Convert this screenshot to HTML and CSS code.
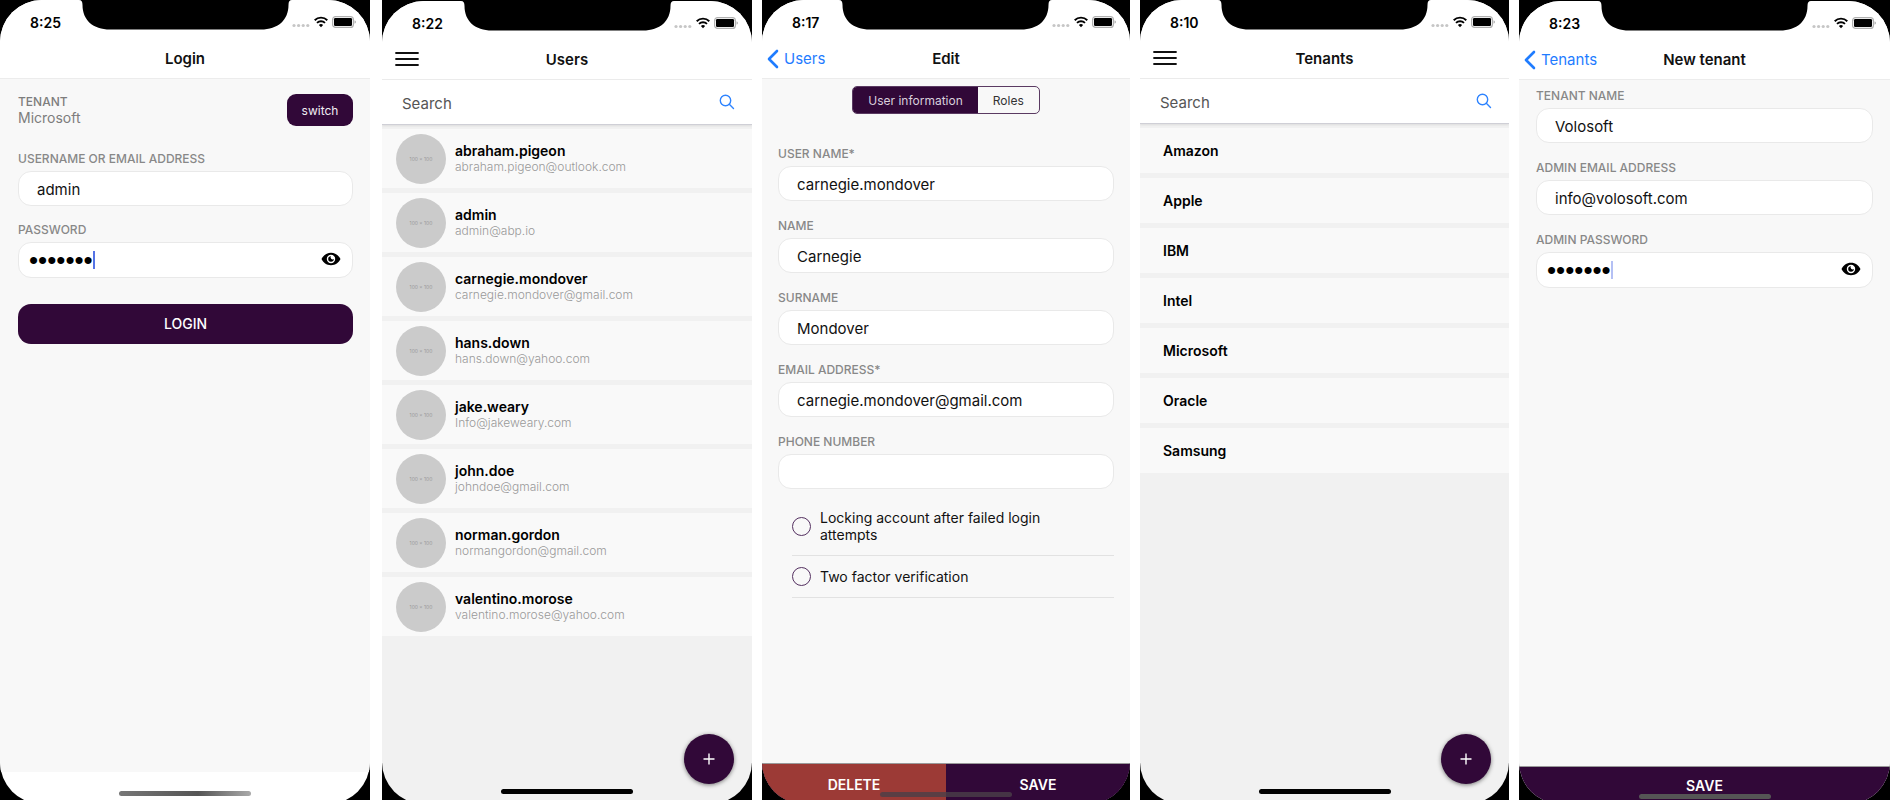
FILE: index.html
```html
<!DOCTYPE html>
<html lang="en">
<head>
<meta charset="utf-8">
<title>Mobile screens</title>
<link rel="stylesheet" href="styles.css">
</head>
<body>
<svg class="sprite" aria-hidden="true">
  <symbol id="notch" viewBox="0 0 213 30"><path d="M0 0C2.500 0 3.500 1.500 3.500 5C3.500 20 14 29.500 31 29.500H182C199 29.500 209.500 20 209.500 5C209.500 1.500 210.500 0 213 0Z"/></symbol>
  <symbol id="dots" viewBox="0 0 18 14"><g fill="#c6c6c6"><circle cx="2" cy="10.500" r="1.600"/><circle cx="6.600" cy="10.500" r="1.600"/><circle cx="11.200" cy="10.500" r="1.600"/><circle cx="15.800" cy="10.500" r="1.600"/></g></symbol>
  <symbol id="wifi" viewBox="0 0 14 14"><g fill="none" stroke="#000" stroke-width="1.900"><path d="M.7 5.200A9 9 0 0 1 13.300 5.200"/><path d="M3 7.900A5.700 5.700 0 0 1 11 7.900"/></g><path d="M7 12.300L4.900 10.100A3 3 0 0 1 9.100 10.100Z"/></symbol>
  <symbol id="battery" viewBox="0 0 24 14"><rect x=".6" y="1.600" width="20.800" height="10.800" rx="3" fill="none" stroke="#b0b0b0" stroke-width="1.200"/><rect x="2" y="3" width="18" height="8" rx="1.300"/><path d="M22.500 5.200Q24 6 24 7T22.500 8.800Z" fill="#b0b0b0"/></symbol>
  <symbol id="menu" viewBox="0 0 24 16"><path d="M1 2H23M1 8H23M1 14H23" fill="none" stroke="#111" stroke-width="1.800" stroke-linecap="round"/></symbol>
  <symbol id="back" viewBox="0 0 12 20"><path d="M10 2L2 10L10 18" fill="none" stroke="#1f7cff" stroke-width="2.600" stroke-linecap="round" stroke-linejoin="round"/></symbol>
  <symbol id="search" viewBox="0 0 16 16"><g fill="none" stroke="#2f84ff" stroke-width="1.400" stroke-linecap="round"><circle cx="6.500" cy="6.500" r="5.200"/><path d="M10.300 10.300L14.500 14.500"/></g></symbol>
  <symbol id="eye" viewBox="0 0 20 14"><path fill-rule="evenodd" d="M10 .8C5.500.8 2.200 3.500.5 7C2.200 10.500 5.500 13.200 10 13.200S17.800 10.500 19.500 7C17.800 3.500 14.500.8 10 .8ZM10 2.800A4.200 4.200 0 1 1 10 11.200A4.200 4.200 0 0 1 10 2.800Z"/><path d="M10 4.200A2.800 2.800 0 1 0 12.800 7A2 2 0 0 1 10 4.200Z"/></symbol>
  <symbol id="plus" viewBox="0 0 12 12"><path d="M6 .5V11.500M.5 6H11.500" stroke="#fff" stroke-width="1.400"/></symbol>
</svg>
<main class="gallery">

  <section class="phone phone--first">
    <div class="screen">
      <div class="status"><span class="time">8:25</span><svg class="notch"><use href="#notch"/></svg><div class="signals"><svg class="dots"><use href="#dots"/></svg><svg class="wifi"><use href="#wifi"/></svg><svg class="battery"><use href="#battery"/></svg></div></div>
      <header class="nav"><h1 class="title">Login</h1></header>
      <form class="form form--login">
        <div class="tenant">
          <div><div class="tenant-label">TENANT</div><div class="tenant-name">Microsoft</div></div>
          <button type="button" class="switch">switch</button>
        </div>
        <div class="field"><label for="login-user">USERNAME OR EMAIL ADDRESS</label><input id="login-user" type="text" value="admin"></div>
        <div class="field"><label for="login-pass">PASSWORD</label>
          <div class="secret"><input id="login-pass" type="password" value="1q2w3E*"><span class="caret"></span><button type="button" class="reveal" aria-label="Show password"><svg class="eye"><use href="#eye"/></svg></button></div></div>
        <button type="button" class="login">LOGIN</button>
      </form>
      <footer class="dock"></footer>
      <span class="home home--fade"></span>
    </div>
  </section>

  <section class="phone phone--low">
    <div class="screen screen--list">
      <div class="status"><span class="time">8:22</span><svg class="notch"><use href="#notch"/></svg><div class="signals"><svg class="dots"><use href="#dots"/></svg><svg class="wifi"><use href="#wifi"/></svg><svg class="battery"><use href="#battery"/></svg></div></div>
      <header class="nav"><button type="button" class="menu" aria-label="Menu"><svg class="menu-icon"><use href="#menu"/></svg></button><h1 class="title">Users</h1></header>
      <div class="search"><input type="search" placeholder="Search" aria-label="Search users"><svg class="search-icon"><use href="#search"/></svg></div>
      <ul class="list">
        <li class="user"><span class="avatar">100 x 100</span><div><div class="name">abraham.pigeon</div><div class="email">abraham.pigeon@outlook.com</div></div></li>
        <li class="user"><span class="avatar">100 x 100</span><div><div class="name">admin</div><div class="email">admin@abp.io</div></div></li>
        <li class="user"><span class="avatar">100 x 100</span><div><div class="name">carnegie.mondover</div><div class="email">carnegie.mondover@gmail.com</div></div></li>
        <li class="user"><span class="avatar">100 x 100</span><div><div class="name">hans.down</div><div class="email">hans.down@yahoo.com</div></div></li>
        <li class="user"><span class="avatar">100 x 100</span><div><div class="name">jake.weary</div><div class="email">Info@jakeweary.com</div></div></li>
        <li class="user"><span class="avatar">100 x 100</span><div><div class="name">john.doe</div><div class="email">johndoe@gmail.com</div></div></li>
        <li class="user"><span class="avatar">100 x 100</span><div><div class="name">norman.gordon</div><div class="email">normangordon@gmail.com</div></div></li>
        <li class="user"><span class="avatar">100 x 100</span><div><div class="name">valentino.morose</div><div class="email">valentino.morose@yahoo.com</div></div></li>
      </ul>
      <button type="button" class="fab" aria-label="Add user"><svg class="plus"><use href="#plus"/></svg></button>
      <span class="home"></span>
    </div>
  </section>

  <section class="phone">
    <div class="screen">
      <div class="status"><span class="time">8:17</span><svg class="notch"><use href="#notch"/></svg><div class="signals"><svg class="dots"><use href="#dots"/></svg><svg class="wifi"><use href="#wifi"/></svg><svg class="battery"><use href="#battery"/></svg></div></div>
      <header class="nav"><a class="back" href="#"><svg class="back-icon"><use href="#back"/></svg>Users</a><h1 class="title">Edit</h1></header>
      <form class="form form--edit">
        <div class="tabs"><button type="button" class="tab tab--on">User information</button><button type="button" class="tab">Roles</button></div>
        <div class="field"><label for="e-user">USER NAME*</label><input id="e-user" type="text" value="carnegie.mondover"></div>
        <div class="field"><label for="e-name">NAME</label><input id="e-name" type="text" value="Carnegie"></div>
        <div class="field"><label for="e-sur">SURNAME</label><input id="e-sur" type="text" value="Mondover"></div>
        <div class="field"><label for="e-mail">EMAIL ADDRESS*</label><input id="e-mail" type="email" value="carnegie.mondover@gmail.com"></div>
        <div class="field"><label for="e-phone">PHONE NUMBER</label><input id="e-phone" type="tel"></div>
        <div class="checks">
          <label class="check"><input type="checkbox"><span>Locking account after failed login attempts</span></label>
          <label class="check"><input type="checkbox"><span>Two factor verification</span></label>
        </div>
      </form>
      <footer class="actions"><button type="button" class="action action--delete">DELETE</button><button type="button" class="action">SAVE</button></footer>
      <span class="home home--dim"></span>
    </div>
  </section>

  <section class="phone">
    <div class="screen screen--list">
      <div class="status"><span class="time">8:10</span><svg class="notch"><use href="#notch"/></svg><div class="signals"><svg class="dots"><use href="#dots"/></svg><svg class="wifi"><use href="#wifi"/></svg><svg class="battery"><use href="#battery"/></svg></div></div>
      <header class="nav"><button type="button" class="menu" aria-label="Menu"><svg class="menu-icon"><use href="#menu"/></svg></button><h1 class="title">Tenants</h1></header>
      <div class="search"><input type="search" placeholder="Search" aria-label="Search tenants"><svg class="search-icon"><use href="#search"/></svg></div>
      <ul class="list">
        <li class="org">Amazon</li>
        <li class="org">Apple</li>
        <li class="org">IBM</li>
        <li class="org">Intel</li>
        <li class="org">Microsoft</li>
        <li class="org">Oracle</li>
        <li class="org">Samsung</li>
      </ul>
      <button type="button" class="fab" aria-label="Add tenant"><svg class="plus"><use href="#plus"/></svg></button>
      <span class="home"></span>
    </div>
  </section>

  <section class="phone phone--low">
    <div class="screen">
      <div class="status"><span class="time">8:23</span><svg class="notch"><use href="#notch"/></svg><div class="signals"><svg class="dots"><use href="#dots"/></svg><svg class="wifi"><use href="#wifi"/></svg><svg class="battery"><use href="#battery"/></svg></div></div>
      <header class="nav"><a class="back" href="#"><svg class="back-icon"><use href="#back"/></svg>Tenants</a><h1 class="title">New tenant</h1></header>
      <form class="form form--new">
        <div class="field"><label for="t-name">TENANT NAME</label><input id="t-name" type="text" value="Volosoft"></div>
        <div class="field"><label for="t-mail">ADMIN EMAIL ADDRESS</label><input id="t-mail" type="email" value="info@volosoft.com"></div>
        <div class="field"><label for="t-pass">ADMIN PASSWORD</label>
          <div class="secret"><input id="t-pass" type="password" value="1q2w3E*"><span class="caret caret--soft"></span><button type="button" class="reveal" aria-label="Show password"><svg class="eye"><use href="#eye"/></svg></button></div></div>
      </form>
      <footer class="actions actions--new"><button type="button" class="action">SAVE</button></footer>
      <span class="home home--grey"></span>
    </div>
  </section>

</main>
</body>
</html>
```
FILE: styles.css
```css
* { box-sizing: border-box; }
body { margin: 0; background: #fff; color: #111; font-family: Inter, "Liberation Sans", sans-serif; font-size: 15px; }
button, input { font-family: inherit; margin: 0; padding: 0; border: 0; }
button { background: none; }
svg { display: block; flex: none; }
.sprite { position: absolute; width: 0; height: 0; }

.gallery { display: grid; grid-template-columns: 372fr 370fr 368fr 369fr 371fr; gap: 10px; height: 100vh; overflow: hidden; }
.phone { background: #000; overflow: hidden; display: flex; min-width: 0; }
.phone--first { margin-right: 2px; }
.phone--low { padding-top: 1px; }
.screen { position: relative; flex: 1; min-width: 0; display: flex; flex-direction: column; margin-bottom: -4px; background: #fff; border-radius: 42px; overflow: hidden; }
.screen--list { background: #f1f1f1; }

.status { display: grid; grid-template-columns: 1fr auto 1fr; height: 44px; background: #fff; }
.notch { width: 213px; height: 30px; }
.time { padding: 14px 0 0 30px; font-size: 14px; line-height: 18px; font-weight: 600; color: #000; }
.signals { display: flex; justify-content: flex-end; gap: 4px; padding: 15px 14px 0 0; }
.dots { width: 18px; height: 14px; }
.wifi { width: 14px; height: 14px; }
.battery { width: 24px; height: 14px; }

.nav { position: relative; display: flex; align-items: center; height: 35px; padding-bottom: 4px; background: #fff; border-bottom: 1px solid #ececec; }
.title { flex: 1; margin: 0; text-align: center; font-size: 15px; line-height: 20px; font-weight: 600; }
.menu { position: absolute; left: 13px; top: 6px; }
.menu-icon { width: 24px; height: 16px; }
.back { position: absolute; left: 5px; top: 5px; display: flex; align-items: center; gap: 5px; color: #1f7cff; text-decoration: none; line-height: 20px; }
.back-icon { width: 12px; height: 20px; }

.form { flex: 1; display: flex; flex-direction: column; gap: 17px; padding: 0 17px; background: #f8f8f8; }
.form--login { gap: 16px; padding: 15px 17px 0 18px; }
.form--edit { padding: 7px 16px 0; }
.form--new { padding-top: 8px; }
.field { display: flex; flex-direction: column; gap: 4px; }
.field label { font-size: 12px; line-height: 16px; font-weight: 500; color: #888; }
.field input { width: 100%; height: 35px; padding: 2px 18px 0; border: 1px solid #e9e9e9; border-radius: 13px; background: #fff; font-size: 15px; color: #111; outline: 0; }
.secret { position: relative; }
.field .secret input { height: 36px; padding: 0 50px 0 10px; font-family: "Liberation Sans", sans-serif; font-size: 26px; color: #000; }
.caret { position: absolute; left: 75px; top: 9px; width: 2px; height: 18px; background: #5573e6; }
.caret--soft { background: #b4c0f4; }
.reveal { position: absolute; right: 12px; top: 10px; }
.eye { width: 20px; height: 14px; }

.tenant { display: flex; justify-content: space-between; align-items: center; margin-bottom: 9px; color: #7d7d7d; }
.tenant-label { font-size: 12px; line-height: 16px; font-weight: 500; }
.tenant-name { font-size: 14px; line-height: 16px; }
.switch { width: 66px; height: 32px; border-radius: 9px; background: #310838; color: #f2eef3; font-size: 12px; }
.login { height: 40px; margin-top: 10px; border-radius: 13px; background: #310838; color: #fff; font-size: 14px; line-height: 20px; padding-bottom: 1px; font-weight: 500; }
.dock { height: 32px; }

.tabs { align-self: center; display: flex; height: 28px; margin-bottom: 15px; border: 1px solid #5a3a62; border-radius: 5px; overflow: hidden; }
.tab { padding: 0 15px; font-size: 12px; color: #333; }
.tab--on { background: #310838; color: #d9cfdc; }
.checks { padding-left: 14px; margin-top: -9px; }
.check { display: flex; align-items: center; gap: 9px; padding: 12px 60px 12px 0; border-bottom: 1px solid #e2e2e2; font-size: 14px; line-height: 17px; }
.check input { appearance: none; flex: none; width: 19px; height: 19px; margin: -1px 0; border: 1px solid #543060; border-radius: 50%; }

.search { position: relative; display: flex; height: 45px; background: #fff; border-bottom: 1px solid #cfcfd6; box-shadow: 0 1px 2px #dcdcdc; }
.search input { flex: 1; min-width: 0; padding: 3px 50px 0 20px; background: none; font-size: 15px; outline: 0; }
.search input::placeholder { color: #555; opacity: 1; }
.search-icon { position: absolute; right: 17px; top: 14px; width: 16px; height: 16px; }
.list { display: grid; gap: 5px; margin: 4px 0 0; padding: 0; list-style: none; }
.user { display: flex; align-items: center; gap: 9px; height: 59px; padding-left: 14px; background: #f9f9f9; }
.avatar { display: flex; align-items: center; justify-content: center; flex: none; width: 50px; height: 50px; border-radius: 50%; background: #cbcbcb; color: #999; font-size: 5px; }
.name { font-size: 14px; line-height: 17px; font-weight: 600; color: #000; }
.email { font-size: 12px; line-height: 16px; font-weight: 300; color: #999; }
.org { height: 45px; padding-left: 23px; background: #f9f9f9; font-size: 14px; line-height: 45px; font-weight: 600; color: #000; }

.fab { position: absolute; right: 18px; bottom: 20px; display: flex; align-items: center; justify-content: center; width: 50px; height: 50px; border-radius: 50%; background: #310838; box-shadow: 0 1px 4px #777; }
.plus { width: 12px; height: 12px; }
.actions { display: flex; height: 41px; border-top: 1px solid #999; background: #310838; }
.actions--new { height: 38px; }
.action { flex: 1; background: #310838; color: #fff; font-size: 14px; font-weight: 600; }
.action--delete { background: #9c3a36; }
.home { position: absolute; left: calc(50% - 66px); bottom: 10px; width: 132px; height: 5px; border-radius: 3px; background: #000; }
.home--fade { bottom: 8px; background: linear-gradient(90deg, #777, #555 60%, #aaa); }
.home--dim { bottom: 7px; background: #4b4048; opacity: 0.8; }
.home--grey { bottom: 5px; background: #555; }
```
